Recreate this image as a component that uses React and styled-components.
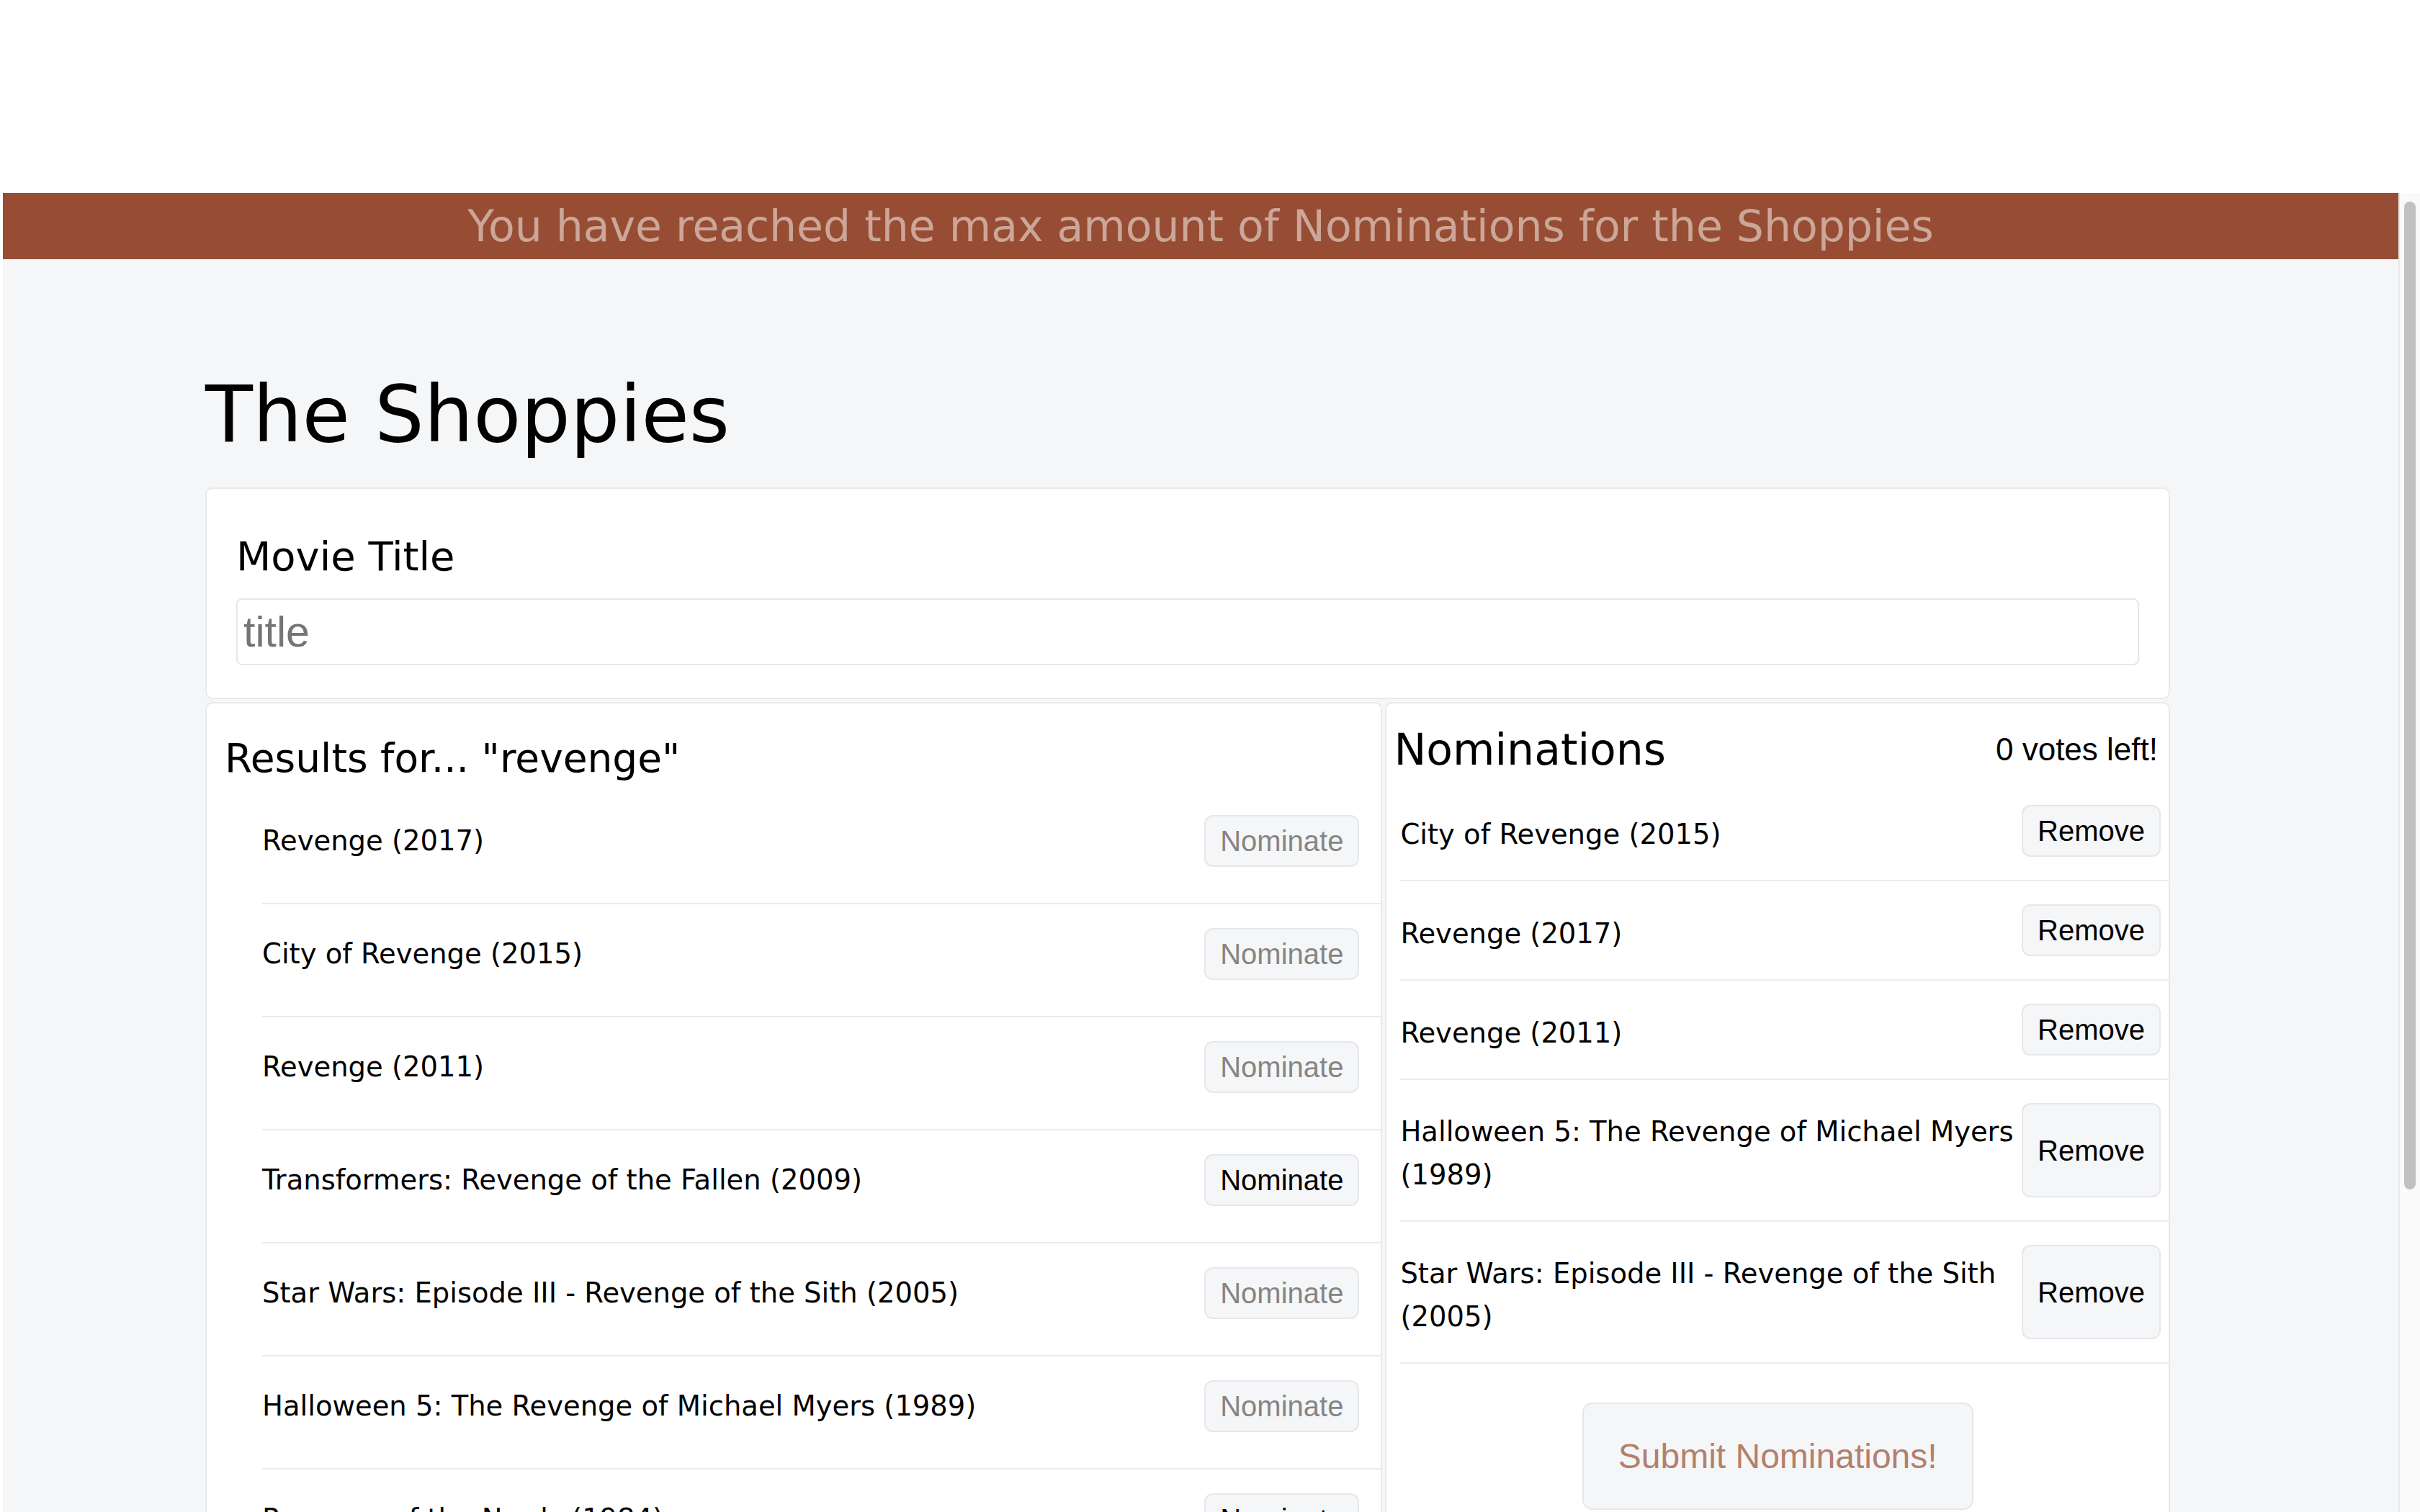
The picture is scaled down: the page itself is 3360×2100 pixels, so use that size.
import React from "react";
import styled, { createGlobalStyle } from "styled-components";

const GlobalStyle = createGlobalStyle`
  html, body {
    margin: 0;
    padding: 0;
    background: #ffffff;
  }
  * {
    box-sizing: border-box;
  }
`;

const results = [
  { title: "Revenge", year: "2017", nominated: true },
  { title: "City of Revenge", year: "2015", nominated: true },
  { title: "Revenge", year: "2011", nominated: true },
  { title: "Transformers: Revenge of the Fallen", year: "2009", nominated: false },
  { title: "Star Wars: Episode III - Revenge of the Sith", year: "2005", nominated: true },
  { title: "Halloween 5: The Revenge of Michael Myers", year: "1989", nominated: true },
  { title: "Revenge of the Nerds", year: "1984", nominated: false },
  { title: "Revenge of the Nerds II: Nerds in Paradise", year: "1987", nominated: false },
  { title: "Revenge of the Pink Panther", year: "1978", nominated: false },
  { title: "Revenge of the Zombies", year: "1943", nominated: false },
];

const nominations = [
  { title: "City of Revenge", year: "2015" },
  { title: "Revenge", year: "2017" },
  { title: "Revenge", year: "2011" },
  { title: "Halloween 5: The Revenge of Michael Myers", year: "1989" },
  { title: "Star Wars: Episode III - Revenge of the Sith", year: "2005" },
];

export default function App() {
  const votesLeft = 5 - nominations.length;
  return (
    <>
      <GlobalStyle />
      <Screen>
        <Frame>
          <Viewport>
            <Banner>You have reached the max amount of Nominations for the Shoppies</Banner>
            <Main>
              <PageTitle>The Shoppies</PageTitle>
              <SearchCard>
                <Label htmlFor="title">Movie Title</Label>
                <SearchInput id="title" placeholder="title" />
              </SearchCard>
              <Panels>
                <Panel>
                  <ResultsHeading>Results for... "revenge"</ResultsHeading>
                  <ResultList>
                    {results.map((movie, i) => (
                      <ResultRow key={i}>
                        <MovieName>
                          {movie.title} ({movie.year})
                        </MovieName>
                        <ActionButton disabled={movie.nominated}>Nominate</ActionButton>
                      </ResultRow>
                    ))}
                  </ResultList>
                </Panel>
                <Panel>
                  <NomHeader>
                    <NomHeading>Nominations</NomHeading>
                    <VotesLeft>{votesLeft} votes left!</VotesLeft>
                  </NomHeader>
                  <NomList>
                    {nominations.map((movie, i) => (
                      <NomRow key={i}>
                        <NomName>
                          {movie.title} ({movie.year})
                        </NomName>
                        <ActionButton>Remove</ActionButton>
                      </NomRow>
                    ))}
                  </NomList>
                  <SubmitWrap>
                    <SubmitButton>Submit Nominations!</SubmitButton>
                  </SubmitWrap>
                </Panel>
              </Panels>
            </Main>
          </Viewport>
          <ScrollTrack>
            <ScrollThumb />
          </ScrollTrack>
        </Frame>
      </Screen>
    </>
  );
}

const Screen = styled.div`
  height: 100vh;
  padding: 268px 0 0 4px;
  background: #ffffff;
`;

const Frame = styled.div`
  display: flex;
  height: 100%;
`;

const Viewport = styled.div`
  flex: 1;
  min-width: 0;
  overflow: hidden;
  background: #f5f6f8;
  font-family: "DejaVu Sans", sans-serif;
  color: #000;
`;

const ScrollTrack = styled.div`
  width: 30px;
  flex-shrink: 0;
  padding: 12px 6px 0 6px;
  background: #fafafa;
  border-left: 2px solid #e8e8e8;
`;

const ScrollThumb = styled.div`
  height: 1372px;
  border-radius: 8px;
  background: #c1c1c1;
`;

const Banner = styled.div`
  height: 92px;
  line-height: 92px;
  background: #974d33;
  color: rgba(255, 255, 255, 0.5);
  text-align: center;
  font-size: 60px;
  white-space: nowrap;
`;

const Main = styled.main`
  padding: 150px 317px 24px 281px;
`;

const PageTitle = styled.h1`
  margin: 0 0 35px;
  font-size: 108px;
  font-weight: 400;
  line-height: 132px;
`;

const Card = styled.section`
  background: #ffffff;
  border: 2px solid #e8e9eb;
  border-radius: 10px;
`;

const SearchCard = styled(Card)`
  display: flex;
  flex-direction: column;
  padding: 60px 41px 45px;
`;

const Label = styled.label`
  font-size: 56px;
  line-height: 67px;
  margin-bottom: 25px;
`;

const SearchInput = styled.input`
  height: 93px;
  width: 100%;
  padding: 0 8px;
  border: 2px solid #e6e7ea;
  border-radius: 8px;
  background: #fff;
  font-family: "Liberation Sans", Arial, sans-serif;
  font-size: 59px;
  outline: none;

  &::placeholder {
    color: #757575;
  }
`;

const Panels = styled.div`
  display: grid;
  grid-template-columns: 3fr 2fr;
  gap: 4px;
  margin-top: 4px;
`;

const Panel = styled(Card)`
  display: flex;
  flex-direction: column;
`;

const ResultsHeading = styled.h2`
  margin: 43px 0 13px 25px;
  font-size: 55px;
  font-weight: 400;
  line-height: 66px;
`;

const ResultList = styled.ul`
  list-style: none;
  margin: 0;
  padding: 0 0 0 77px;
`;

const ResultRow = styled.li`
  display: flex;
  align-items: center;
  justify-content: space-between;
  padding: 33px 30px 50px 0;
  border-bottom: 2px solid #ebebeb;
`;

const MovieName = styled.span`
  font-size: 38.5px;
  line-height: 60px;
`;

const ActionButton = styled.button`
  flex-shrink: 0;
  padding: 12px 20px;
  border: 2px solid #e6e7ea;
  border-radius: 12px;
  background: #f5f6f8;
  color: #000;
  font-family: "Liberation Sans", Arial, sans-serif;
  font-size: 40px;
  line-height: 44px;
  cursor: pointer;

  &:disabled {
    color: #858585;
    cursor: default;
  }
`;

const NomHeader = styled.div`
  display: flex;
  align-items: center;
  justify-content: space-between;
  padding: 28px 15px 0 10px;
  margin-bottom: 9px;
`;

const NomHeading = styled.h2`
  margin: 0;
  font-size: 60px;
  font-weight: 400;
  line-height: 72px;
`;

const VotesLeft = styled.span`
  font-family: "Liberation Sans", Arial, sans-serif;
  font-size: 44px;
`;

const NomList = styled.ul`
  list-style: none;
  margin: 0;
  padding: 0 0 0 19px;
`;

const NomRow = styled.li`
  display: flex;
  align-items: stretch;
  gap: 6px;
  padding: 32px 11px 32px 0;
  border-bottom: 2px solid #ebebeb;
`;

const NomName = styled.span`
  flex: 1;
  display: flex;
  align-items: center;
  padding: 10px 0 1px;
  font-size: 38.5px;
  line-height: 60px;
`;

const SubmitWrap = styled.div`
  display: flex;
  justify-content: center;
  padding: 54px 0 40px;
`;

const SubmitButton = styled.button`
  padding: 45px 48px;
  border: 2px solid #e6e7ea;
  border-radius: 14px;
  background: #f5f6f8;
  color: #b3806d;
  font-family: "Liberation Sans", Arial, sans-serif;
  font-size: 48px;
  line-height: 55px;
  cursor: pointer;
`;
